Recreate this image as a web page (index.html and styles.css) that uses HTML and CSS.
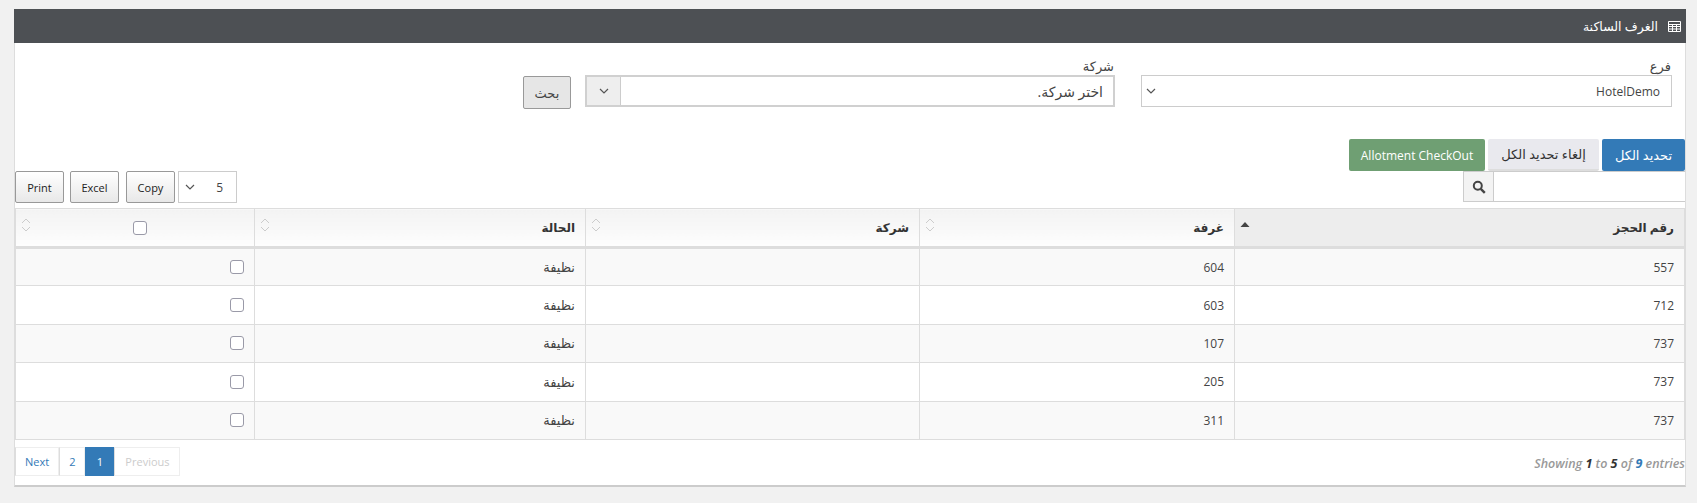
FILE: index.html
```html
<!DOCTYPE html>
<html lang="ar" dir="rtl">
<head>
    <meta charset="UTF-8">
    <title>الغرف الساكنة</title>
    <link rel="stylesheet" href="styles.css">
</head>
<body>
    <div class="panel">
        <div class="panel-title">
            <svg class="title-icon" viewBox="0 0 13 11" width="13" height="11"><path d="M.5.5h12v10H.5zM.5 3.5h12M.5 5.5h12M.5 8h12M4.5 3.5v7M8.5 3.5v7" fill="none" stroke="#fff"/></svg>
            <span>الغرف الساكنة</span>
        </div>

        <div class="filters">
            <div class="field field-branch">
                <label>فرع</label>
                <div class="select">
                    <span class="select-value">HotelDemo</span>
                    <svg class="chevron" viewBox="0 0 10 6" width="10" height="6"><path d="M1 1l4 4 4-4" fill="none" stroke="#555" stroke-width="1.2"/></svg>
                </div>
            </div>
            <div class="field field-company">
                <label>شركة</label>
                <div class="select select-thick">
                    <span class="select-value select-placeholder">اختر شركة.</span>
                    <span class="select-addon">
                        <svg class="chevron" viewBox="0 0 10 6" width="10" height="6"><path d="M1 1l4 4 4-4" fill="none" stroke="#555" stroke-width="1.2"/></svg>
                    </span>
                </div>
            </div>
            <button class="btn btn-search">بحث</button>
        </div>

        <div class="actions">
            <button class="btn-flat btn-blue">تحديد الكل</button>
            <button class="btn-flat btn-light">إلغاء تحديد الكل</button>
            <button class="btn-flat btn-green">Allotment CheckOut</button>
        </div>

        <div class="toolbar">
            <div class="search">
                <input type="text" class="search-input">
                <span class="search-addon">
                    <svg viewBox="0 0 14 14" width="14" height="14"><circle cx="5.8" cy="5.8" r="4" fill="none" stroke="#444" stroke-width="2"/><path d="M8.8 8.8l4 4" stroke="#444" stroke-width="2.4"/></svg>
                </span>
            </div>
            <div class="tools">
                <div class="length">
                    <span>5</span>
                    <svg class="chevron" viewBox="0 0 10 6" width="10" height="6"><path d="M1 1l4 4 4-4" fill="none" stroke="#555" stroke-width="1.2"/></svg>
                </div>
                <button class="btn btn-tool">Copy</button>
                <button class="btn btn-tool">Excel</button>
                <button class="btn btn-tool">Print</button>
            </div>
        </div>

        <table class="grid">
            <thead>
                <tr>
                    <th class="col-res sorted">رقم الحجز<svg class="sort" viewBox="0 0 10 6" width="10" height="6"><path d="M5 0l4.5 5h-9z" fill="#444"/></svg></th>
                    <th class="col-room">غرفة<svg class="sort" viewBox="0 0 10 16" width="10" height="16"><path d="M1 6l4-4 4 4M1 10l4 4 4-4" fill="none" stroke="#ccc"/></svg></th>
                    <th class="col-company">شركة<svg class="sort" viewBox="0 0 10 16" width="10" height="16"><path d="M1 6l4-4 4 4M1 10l4 4 4-4" fill="none" stroke="#ccc"/></svg></th>
                    <th class="col-status">الحالة<svg class="sort" viewBox="0 0 10 16" width="10" height="16"><path d="M1 6l4-4 4 4M1 10l4 4 4-4" fill="none" stroke="#ccc"/></svg></th>
                    <th class="col-check"><span class="check check-head"></span><svg class="sort" viewBox="0 0 10 16" width="10" height="16"><path d="M1 6l4-4 4 4M1 10l4 4 4-4" fill="none" stroke="#ccc"/></svg></th>
                </tr>
            </thead>
            <tbody>
                <tr><td>557</td><td>604</td><td></td><td class="status">نظيفة</td><td><span class="check"></span></td></tr>
                <tr><td>712</td><td>603</td><td></td><td class="status">نظيفة</td><td><span class="check"></span></td></tr>
                <tr><td>737</td><td>107</td><td></td><td class="status">نظيفة</td><td><span class="check"></span></td></tr>
                <tr><td>737</td><td>205</td><td></td><td class="status">نظيفة</td><td><span class="check"></span></td></tr>
                <tr><td>737</td><td>311</td><td></td><td class="status">نظيفة</td><td><span class="check"></span></td></tr>
            </tbody>
        </table>

        <div class="table-foot">
            <div class="info">Showing <b>1</b> to <b>5</b> of <b class="total">9</b> entries</div>
            <div class="pager">
                <a class="page disabled">Previous</a>
                <a class="page current">1</a>
                <a class="page">2</a>
                <a class="page">Next</a>
            </div>
        </div>
    </div>
</body>
</html>
```

FILE: styles.css
```css
* {
    box-sizing: border-box;
}
body {
    margin: 0;
    padding: 9px 11px 16px 14px;
    background-color: #f1f1f1;
    font-family: "Open Sans", "DejaVu Sans", sans-serif;
    font-size: 12px;
    color: #444;
}
.panel {
    height: 478px;
    background-color: #fff;
    border: 1px solid #ddd;
    border-top: 0;
    border-bottom: 2px solid #ccc;
}
.panel-title {
    height: 34px;
    margin: 0 -1px;
    padding: 0 5px;
    display: flex;
    align-items: center;
    gap: 10px;
    background-color: #4d5054;
    color: #fff;
    font-size: 12.5px;
}
.title-icon {
    flex: none;
}
.filters {
    display: flex;
    align-items: flex-start;
    height: 96px;
    padding: 15px 13px 0 0;
}
.field label {
    display: block;
    height: 17px;
    line-height: 17px;
    padding: 0 1px;
    font-size: 13px;
}
.field-branch {
    width: 531px;
}
.field-company {
    width: 530px;
    margin-right: 26px;
}
.select {
    height: 32px;
    display: flex;
    align-items: center;
    justify-content: space-between;
    padding-right: 11px;
    border: 1px solid #ccc;
    background-color: #fff;
}
.select > .chevron {
    margin-left: 4px;
}
.select-thick {
    border: 2px solid #d0d0d0;
    padding-right: 10px;
}
.select-placeholder {
    font-size: 14px;
}
.select-addon {
    align-self: stretch;
    width: 34px;
    display: flex;
    align-items: center;
    justify-content: center;
    background-color: #eee;
    border-right: 1px solid #ccc;
}
.btn {
    font-family: inherit;
    font-size: 11px;
    color: #222;
    border: 1px solid #999;
    border-radius: 2px;
    background: linear-gradient(#fff, #e8e8e8);
}
.btn-search {
    width: 48px;
    height: 33px;
    margin: 18px 14px 0 0;
    font-size: 13px;
    color: #444;
    background: #e6e6e6;
}
.actions {
    display: flex;
    gap: 3px;
    height: 32px;
}
.btn-flat {
    height: 32px;
    border: 0;
    border-radius: 2px;
    font-family: inherit;
    font-size: 13px;
}
.btn-blue {
    width: 83px;
    background-color: #337ab7;
    color: #fff;
}
.btn-light {
    width: 111px;
    background-color: #e9e9ee;
    border-bottom: 2px solid #ddd;
    color: #333;
}
.btn-green {
    width: 136px;
    font-size: 12px;
    background-color: #6f9f73;
    color: #fff;
}
.toolbar {
    display: flex;
    justify-content: space-between;
    align-items: flex-start;
    height: 37px;
}
.search {
    display: flex;
    width: 222px;
    height: 31px;
    border: 1px solid #ccc;
    border-right: 0;
}
.search-input {
    flex: 1;
    min-width: 0;
    border: 0;
}
.search-addon {
    width: 30px;
    display: flex;
    align-items: center;
    justify-content: center;
    background-color: #f3f3f3;
    border-right: 1px solid #ccc;
}
.tools {
    display: flex;
    gap: 7px;
}
.btn-tool {
    width: 49px;
    height: 32px;
}
.btn-tool:last-child {
    margin-right: -1px;
}
.length {
    width: 59px;
    height: 32px;
    margin-left: -4px;
    padding: 0 13px 0 6px;
    display: flex;
    align-items: center;
    justify-content: space-between;
    border: 1px solid #ccc;
    font-size: 12px;
}
.grid {
    width: 1670px;
    border-collapse: collapse;
    table-layout: fixed;
    border: 1px solid #ddd;
}
.grid th {
    height: 39px;
    padding: 0 10px;
    position: relative;
    text-align: right;
    font-size: 12px;
    color: #333;
    background: linear-gradient(#f3f3f3, #fdfdfd);
    border: 1px solid #ddd;
    border-bottom: 3px solid #ddd;
}
.grid th.sorted {
    background: #ededed;
}
.sort {
    position: absolute;
    left: 5px;
    top: 8px;
}
.sorted .sort {
    top: 13px;
}
.col-res {
    width: 450px;
}
.col-room {
    width: 315px;
}
.col-company {
    width: 334px;
}
.col-status {
    width: 331px;
}
.grid th.col-check {
    padding-left: 20px;
}
.grid td {
    height: 38.4px;
    padding: 0 10px;
    font-size: 12px;
    border: 1px solid #ddd;
}
.grid td.status {
    font-size: 13px;
}
.grid tbody tr:nth-child(odd) {
    background-color: #f9f9f9;
}
.check {
    display: block;
    width: 14px;
    height: 14px;
    border: 1px solid #9a9aa8;
    border-radius: 3px;
    background-color: #fff;
}
.check-head {
    margin: 0 auto;
}
.table-foot {
    display: flex;
    justify-content: space-between;
    padding-top: 7px;
}
.info {
    padding-top: 8px;
    font-size: 12.5px;
    font-style: italic;
    font-weight: 600;
    color: #999;
    direction: ltr;
    white-space: nowrap;
}
.info b {
    font-weight: 700;
    color: #333;
}
.info .total {
    color: #337ab7;
}
.pager {
    display: flex;
    height: 29px;
    direction: ltr;
    flex-direction: row-reverse;
    font-size: 11px;
}
.page {
    padding: 0 9px;
    line-height: 27px;
    color: #337ab7;
    border: 1px solid #eee;
    border-left: 1px solid #ddd;
}
.page.current {
    width: 29px;
    padding: 0;
    text-align: center;
    color: #fff;
    background-color: #337ab7;
    border-color: #337ab7;
}
.page.disabled {
    width: 66px;
    padding: 0;
    text-align: center;
    color: #ccc;
}
```
